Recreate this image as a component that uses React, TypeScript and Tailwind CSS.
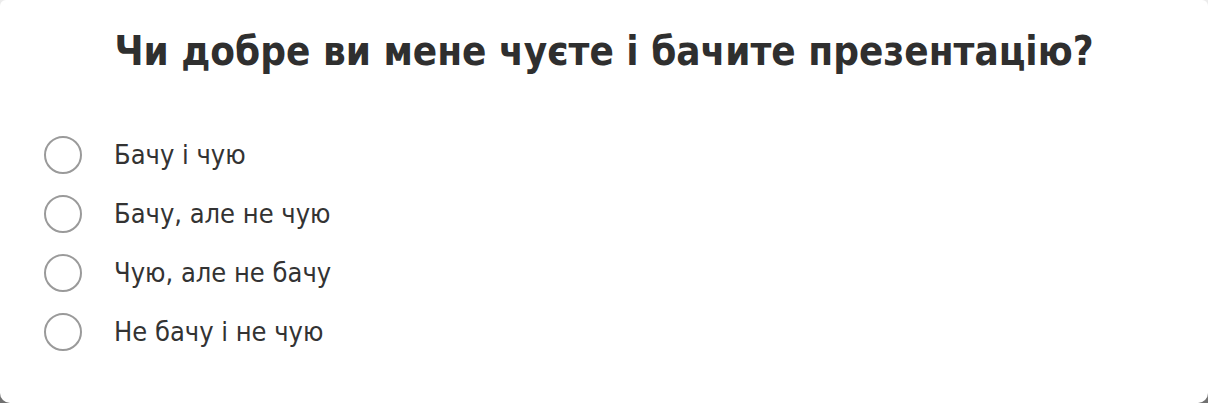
import React from 'react';

const OPTIONS = ['Бачу і чую', 'Бачу, але не чую', 'Чую, але не бачу', 'Не бачу і не чую'];

export default function App() {
  return (
    <div className="h-[403px] w-[1208px] bg-gradient-to-b from-[#ececec] to-[#707070]">
      <div className="h-full w-full rounded-t-[6px] rounded-b-[10px] bg-white pt-[27px] font-['DejaVu_Sans_Condensed','DejaVu_Sans',sans-serif] text-[#333]">
        <h1 className="text-center text-[40px] font-bold leading-[48px] text-[#2f2f2f]">
          Чи добре ви мене чуєте і бачите презентацію?
        </h1>
        <ul className="mt-[61px] flex flex-col gap-[21px] pl-[44px]">
          {OPTIONS.map(label => (
            <li key={label} className="flex items-center gap-[32px]">
              <span className="h-[38px] w-[38px] rounded-full border-2 border-[#9a9a9a]" />
              <span className="text-[27px] leading-[38px]">{label}</span>
            </li>
          ))}
        </ul>
      </div>
    </div>
  );
}
